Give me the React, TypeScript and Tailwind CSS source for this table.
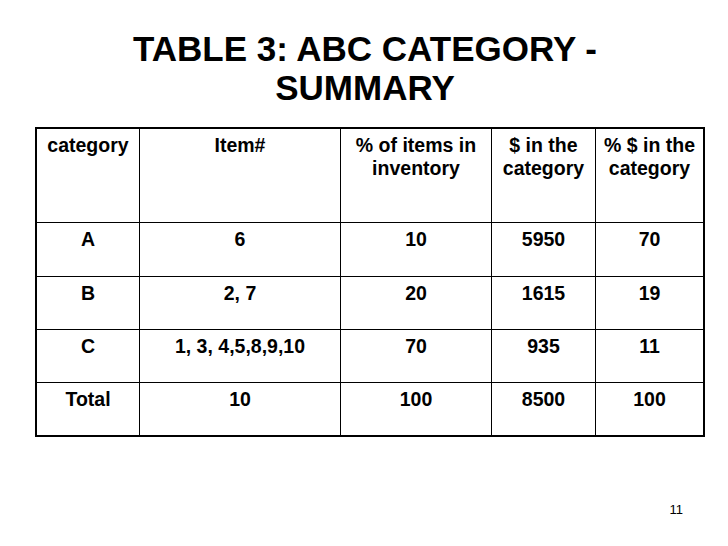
import React from 'react';

interface Row {
  category: string;
  items: string;
  pctItems: string;
  dollars: string;
  pctDollars: string;
  height: string;
}

const rows: Row[] = [
  { category: 'A', items: '6', pctItems: '10', dollars: '5950', pctDollars: '70', height: 'h-[54px]' },
  { category: 'B', items: '2, 7', pctItems: '20', dollars: '1615', pctDollars: '19', height: 'h-[53px]' },
  { category: 'C', items: '1, 3, 4,5,8,9,10', pctItems: '70', dollars: '935', pctDollars: '11', height: 'h-[53px]' },
  { category: 'Total', items: '10', pctItems: '100', dollars: '8500', pctDollars: '100', height: 'h-[52px]' },
];

// widths include the 1px right rule of each cell
const cols = 'grid grid-cols-[103px_201px_151px_104px_107px]';

function Cell({ children, last }: { children: React.ReactNode; last?: boolean }) {
  return (
    <div className={`pt-[5px] text-center leading-[23px] ${last ? '' : 'border-r border-black'}`}>
      {children}
    </div>
  );
}

export default function App() {
  return (
    <div className="w-[728px] h-[546px] bg-white text-black font-['Liberation_Sans',Arial,sans-serif] flex flex-col overflow-hidden">
      <h1 className="mt-[29px] ml-[2px] text-center text-[35px] leading-[39px] font-bold">
        TABLE 3: ABC CATEGORY -<br />SUMMARY
      </h1>

      <div className="mt-[20px] ml-[35px] w-[670px] border-2 border-black text-[19.5px] font-bold">
        {/* header */}
        <div className={`${cols} h-[94px] border-b border-black`}>
          <Cell>category</Cell>
          <Cell>Item#</Cell>
          <Cell>% of items in<br />inventory</Cell>
          <Cell>$ in the<br />category</Cell>
          <Cell last>% $ in the<br />category</Cell>
        </div>

        {rows.map((r, i) => (
          <div
            key={r.category}
            className={`${cols} ${r.height} ${i < rows.length - 1 ? 'border-b border-black' : ''}`}
          >
            <Cell>{r.category}</Cell>
            <Cell>{r.items}</Cell>
            <Cell>{r.pctItems}</Cell>
            <Cell>{r.dollars}</Cell>
            <Cell last>{r.pctDollars}</Cell>
          </div>
        ))}
      </div>

      <div className="mt-[65px] pr-[45px] flex justify-end text-[13px] leading-[16px]">11</div>
    </div>
  );
}
